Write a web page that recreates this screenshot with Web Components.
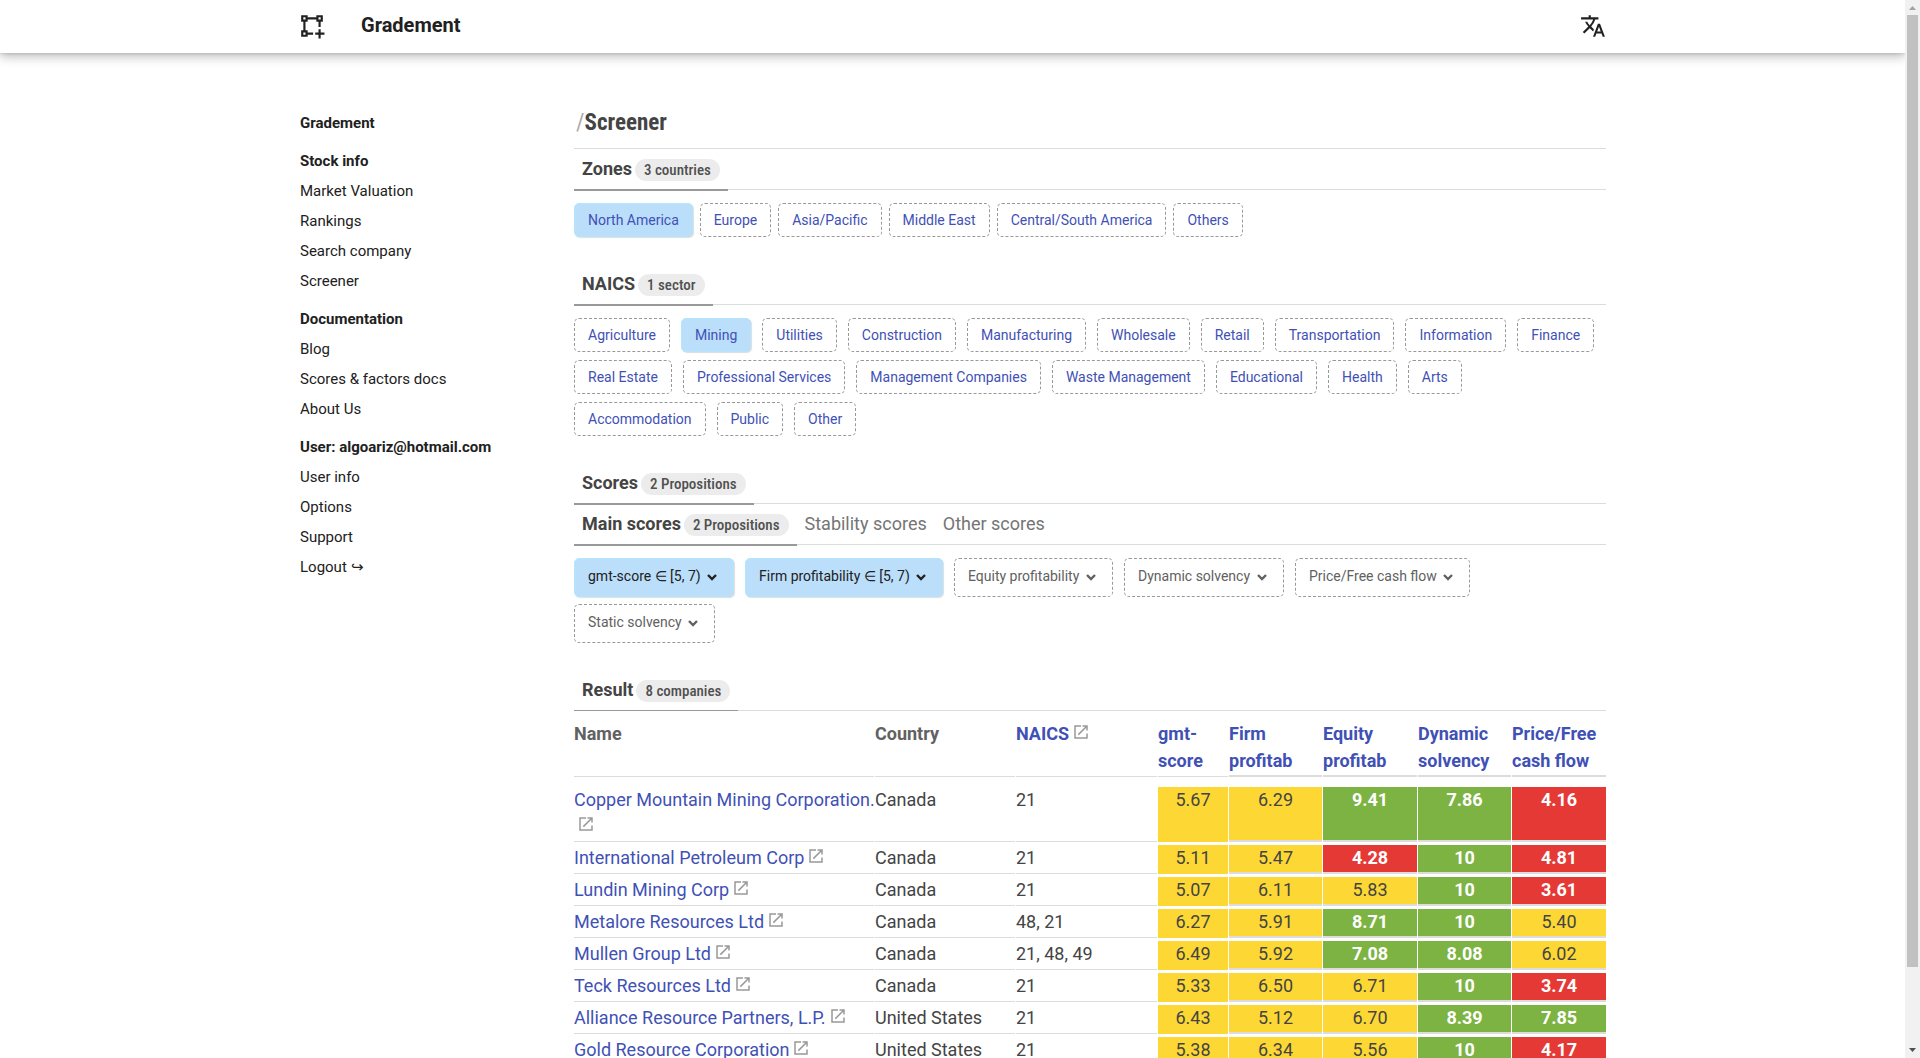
<!DOCTYPE html>
<html lang="en">
<head>
<meta charset="utf-8">
<title>Gradement - Screener</title>
<style>
  html, body { margin: 0; height: 100%; }
  body {
    --link: #3f51b5; --text: #444; --muted: #757575; --line: #dcdcdc; --strong-line: #999;
    --chip: 14px; --small: 15px; --base: 18px;
    font-family: Roboto, "Liberation Sans", sans-serif; font-size: var(--base); color: var(--text); background: #fff;
    overflow: hidden;
  }
  h1 span { color: #aaa; font-weight: 400; }
</style>
</head>
<body>
<gm-app>
  <gm-header slot="header">Gradement</gm-header>
  <gm-nav slot="nav"></gm-nav>
  <h1 slot="title"><span>/</span>Screener</h1>
  <gm-section ruled heading="Zones" badge="3 countries">
    <gm-chips label="Zones" gap="small">
      <gm-chip on>North America</gm-chip><gm-chip>Europe</gm-chip><gm-chip>Asia/Pacific</gm-chip><gm-chip>Middle East</gm-chip><gm-chip>Central/South America</gm-chip><gm-chip>Others</gm-chip>
    </gm-chips>
  </gm-section>
  <gm-section heading="NAICS" badge="1 sector">
    <gm-chips label="NAICS">
      <gm-chip>Agriculture</gm-chip><gm-chip on>Mining</gm-chip><gm-chip>Utilities</gm-chip><gm-chip>Construction</gm-chip><gm-chip>Manufacturing</gm-chip><gm-chip>Wholesale</gm-chip><gm-chip>Retail</gm-chip><gm-chip>Transportation</gm-chip><gm-chip>Information</gm-chip><gm-chip>Finance</gm-chip>
      <gm-chip>Real Estate</gm-chip><gm-chip>Professional Services</gm-chip><gm-chip>Management Companies</gm-chip><gm-chip>Waste Management</gm-chip><gm-chip>Educational</gm-chip><gm-chip>Health</gm-chip><gm-chip>Arts</gm-chip>
      <gm-chip>Accommodation</gm-chip><gm-chip>Public</gm-chip><gm-chip>Other</gm-chip>
    </gm-chips>
  </gm-section>
  <gm-section heading="Scores" badge="2 Propositions" flush></gm-section>
  <gm-section heading="Main scores" badge="2 Propositions" tabs="Stability scores|Other scores">
    <gm-chips label="Main scores" gap="filters">
      <gm-filter on value="gmt-score ∈ [5, 7)"></gm-filter><gm-filter on value="Firm profitability ∈ [5, 7)"></gm-filter><gm-filter value="Equity profitability"></gm-filter><gm-filter value="Dynamic solvency"></gm-filter><gm-filter value="Price/Free cash flow"></gm-filter><gm-filter value="Static solvency"></gm-filter>
    </gm-chips>
  </gm-section>
  <gm-section thin flush heading="Result" badge="8 companies"><gm-results></gm-results></gm-section>
</gm-app>

<script>
const define = (name, render) => customElements.define(name, class extends HTMLElement {
  connectedCallback() {
    if (this.shadowRoot) return;
    this.attachShadow({ mode: "open" }).innerHTML = render(this);
  }
});

define("gm-app", () => `
<style>
  :host { display: flex; height: 100vh; }
  .view { flex: 1; min-width: 0; overflow: hidden; }
  .grid { box-sizing: border-box; max-width: 1307px; margin: 0 auto; padding-left: 1px; display: flex; }
  nav { flex: 0 0 274px; padding-top: 60px; }
  main { flex: 1; min-width: 0; padding-top: 54px; }
  ::slotted(h1) { margin: 0 0 9px; padding-left: 2px; font: 700 23px/32px "Roboto Condensed", Roboto, sans-serif; }
</style>
<div class="view">
  <slot name="header"></slot>
  <div class="grid">
    <nav><slot name="nav"></slot></nav>
    <main><slot name="title"></slot><slot></slot></main>
  </div>
</div>
<gm-scrollbar></gm-scrollbar>`);

define("gm-scrollbar", () => `
<style>
  :host { display: flex; flex-direction: column; flex: 0 0 15px; background: #f1f1f1; }
  svg { display: block; width: 15px; height: 15px; }
  .track { flex: 1; display: flex; flex-direction: column; padding: 0 2px; }
  .thumb { flex: 952; background: #c1c1c1; }
  .rest { flex: 76; }
</style>
<svg viewBox="0 0 15 15" fill="#a3a3a3"><path d="M4 10h7L7.500 6z"/></svg>
<div class="track"><div class="thumb"></div><div class="rest"></div></div>
<svg viewBox="0 0 15 15" fill="#505050"><path d="M4 5h7L7.500 9z"/></svg>`);

define("gm-header", () => `
<style>
  :host { display: block; color: #212121; background: #fff; box-shadow: 0 0 4px rgba(0,0,0,.2), 0 4px 10px rgba(0,0,0,.24); }
  .bar { box-sizing: border-box; height: 53px; max-width: 1307px; margin: 0 auto; padding-bottom: 1px; display: flex; align-items: center; }
  .title { flex: 1; margin-left: 36px; font: 700 20px/26px Roboto, sans-serif; padding-bottom: 2px; }
  a, button { display: block; padding: 0; border: 0; background: none; color: inherit; }
  svg { display: block; width: 26px; height: 26px; }
</style>
<div class="bar">
  <a href="#" aria-label="Home"><svg viewBox="0 0 24 24" fill="none" stroke="currentColor" stroke-width="2"><path d="M3 3h4v4H3zM17 3h4v4h-4zM3 17h4v4H3zM7 5h10M5 7v10M19 7v6M7 19h6M19 15v8.500M15 19h8.500"/></svg></a>
  <div class="title"><slot></slot></div>
  <button aria-label="Language"><svg viewBox="0 0 24 24" fill="currentColor"><path d="M12.870 15.070l-2.540-2.510.03-.03A17.520 17.520 0 0 0 14.070 6H17V4h-7V2H8v2H1v2h11.170C11.500 7.920 10.440 9.750 9 11.350 8.070 10.320 7.300 9.190 6.690 8h-2c.73 1.630 1.730 3.170 2.980 4.560l-5.090 5.020L4 19l5-5 3.110 3.110.76-2.040M18.500 10h-2L12 22h2l1.120-3h4.750L21 22h2l-4.500-12m-2.620 7l1.620-4.330L19.120 17h-3.240z"/></svg></button>
</div>`);

const menu = [
  ["Gradement"],
  ["Stock info", "Market Valuation", "Rankings", "Search company", "Screener"],
  ["Documentation", "Blog", "Scores &amp; factors docs", "About Us"],
  ["User: algoariz@hotmail.com", "User info", "Options", "Support", "Logout ↪"],
];
define("gm-nav", () => `
<style>
  :host { display: flex; flex-direction: column; gap: 18px; font-size: var(--small); line-height: 20px; color: #212121; }
  ul { display: flex; flex-direction: column; gap: 10px; margin: 0; padding: 0; list-style: none; }
  li:first-child { font-weight: 700; }
  a { color: inherit; text-decoration: none; }
</style>
${menu.map(g => `<ul>${g.map((t, i) => `<li>${i || g.length < 2 ? `<a href="#">${t}</a>` : t}</li>`).join("")}</ul>`).join("")}`);

define("gm-section", el => `
<style>
  :host { display: block; margin-bottom: 27px; }
  :host([flush]) { margin-bottom: 0; }
  :host([ruled]) { border-top: 1px solid var(--line); }
  .tabs { display: flex; height: 40px; border-bottom: 1px solid var(--line); }
  .tab { display: flex; align-items: center; gap: 3px; height: 40px; padding: 0 8px; line-height: 24px; }
  .on { border-bottom: 2px solid var(--strong-line); font-weight: 700; }
  :host([thin]) .on { border-bottom-width: 1px; }
  h2 { margin: 0; font: inherit; }
  .badge { margin-top: 2px; padding: 0 9px; border-radius: 11px; background: #ececec; color: #505050; font: 500 15px/22px "Roboto Condensed", Roboto, sans-serif; }
  button { border: 0; background: none; font: inherit; color: var(--muted); }
  .body { padding-top: 13px; }
  :host([flush]) .body { padding-top: 0; }
</style>
<div class="tabs">
  <div class="tab on"><h2>${el.getAttribute("heading")}</h2><span class="badge">${el.getAttribute("badge")}</span></div>
  ${(el.getAttribute("tabs") || "").split("|").filter(Boolean).map(t => `<button class="tab">${t}</button>`).join("")}
</div>
<div class="body"><slot></slot></div>`);

define("gm-chips", el => `
<style>
  :host { display: block; }
  .row { display: flex; flex-wrap: wrap; gap: 8px 11px; padding-right: 8px; }
  :host([gap=small]) .row { gap: 7px; }
  :host([gap=filters]) .row { gap: 7px 11px; }
</style>
<div class="row" role="group" aria-label="${el.getAttribute("label")}"><slot></slot></div>`);

define("gm-chip", el => `
<style>
  :host { display: block; }
  button { height: 34px; padding: 0 13px; border: 1px dashed #999; border-radius: 5px; background: #fff; color: var(--link); font: 400 var(--chip)/20px Roboto, sans-serif; }
  :host([on]) button { border: 1px solid #b3e5fc; background: #bbdefb; box-shadow: 1px 1px 1px #ddd; }
</style>
<button aria-pressed="${el.hasAttribute("on")}"><slot></slot></button>`);

define("gm-filter", el => `
<style>
  :host { display: grid; color: #616161; }
  :host([on]) { color: #212121; }
  select, svg { grid-area: 1 / 1; }
  select { height: 39px; padding: 0 32px 3px 13px; border: 1px dashed #999; border-radius: 5px; background: #fff; color: inherit; font: 400 var(--chip)/20px Roboto, sans-serif; appearance: none; }
  :host([on]) select { border: 1px solid #b3e5fc; background: #bbdefb; box-shadow: 1px 1px 1px #ddd; }
  svg { width: 10px; height: 10px; justify-self: end; align-self: center; margin: 0 17px 2px 0; pointer-events: none; }
</style>
<select aria-label="${el.getAttribute("value")}"><option>${el.getAttribute("value")}</option></select>
<svg viewBox="0 0 10 10" fill="none" stroke="currentColor" stroke-width="2.400"><path d="M1 3l4 4 4-4"/></svg>`);

define("gm-out", () => `
<style>
  :host { display: inline-block; margin-left: 3px; vertical-align: -1px; color: #999; }
  svg { display: block; width: 18px; height: 18px; }
</style>
<svg viewBox="0 0 24 24" fill="currentColor"><path d="M14 3v2h3.590l-9.830 9.830 1.410 1.410L19 6.410V10h2V3m-2 16H5V5h7V3H3v18h18v-7h-2v5z"/></svg>`);

const rows = [
  ["Copper Mountain Mining Corporation.", "Canada", "21", "5.67", "6.29", "9.41", "7.86", "4.16"],
  ["International Petroleum Corp", "Canada", "21", "5.11", "5.47", "4.28", "10", "4.81"],
  ["Lundin Mining Corp", "Canada", "21", "5.07", "6.11", "5.83", "10", "3.61"],
  ["Metalore Resources Ltd", "Canada", "48, 21", "6.27", "5.91", "8.71", "10", "5.40"],
  ["Mullen Group Ltd", "Canada", "21, 48, 49", "6.49", "5.92", "7.08", "8.08", "6.02"],
  ["Teck Resources Ltd", "Canada", "21", "5.33", "6.50", "6.71", "10", "3.74"],
  ["Alliance Resource Partners, L.P.", "United States", "21", "6.43", "5.12", "6.70", "8.39", "7.85"],
  ["Gold Resource Corporation", "United States", "21", "5.38", "6.34", "5.56", "10", "4.17"],
];
const grade = v => v >= 7 ? "high" : v >= 5 ? "mid" : "low";
const score = (v, i) => `<td class="score ${i ? "" : "main"}"><div class="${grade(+v)}">${v}</div></td>`;
define("gm-results", () => `
<style>
  :host { display: block; margin: 0 -1px; }
  table { width: 100%; table-layout: fixed; border-spacing: 1px 0; line-height: 26px; }
  .c-country { width: 140px; } .c-naics { width: 141px; } .c-main { width: 70px; } .c-score { width: 93px; } .c-wide { width: 94px; }
  th { height: 54px; padding: 9px 0 2px; text-align: left; vertical-align: top; line-height: 27px; color: #616161; border-bottom: 1px solid var(--line); }
  th.score { border-bottom-width: 2px; padding-bottom: 1px; }
  td { padding: 3px 0 2px; vertical-align: top; border-bottom: 1px solid var(--line); height: 26px; }
  tr:first-child td { padding-top: 10px; }
  td.score { height: 1px; padding-bottom: 0; border-bottom-width: 2px; text-align: center; }
  td.main { border-bottom: 0; }
  td.score div { box-sizing: border-box; height: 100%; min-height: 27px; }
  td.main div { min-height: 29px; }
  tr:first-child td.score div { min-height: 53px; }
  tr:first-child td.main div { min-height: 55px; }
  .mid { background: #fdd835; } .high { background: #7cb342; } .low { background: #e53935; }
  .high, .low { color: #fff; font-weight: 700; }
  a { color: var(--link); text-decoration: none; white-space: nowrap; }
</style>
<table>
  <colgroup><col><col class="c-country"><col class="c-naics"><col class="c-main"><col class="c-score"><col class="c-wide"><col class="c-score"><col class="c-wide"></colgroup>
  <thead><tr><th>Name</th><th>Country</th><th><a href="#">NAICS</a><gm-out></gm-out></th><th><a href="#">gmt-<br>score</a></th>
  <th class="score"><a href="#">Firm<br>profitab</a></th><th class="score"><a href="#">Equity<br>profitab</a></th><th class="score"><a href="#">Dynamic<br>solvency</a></th><th class="score"><a href="#">Price/Free<br>cash flow</a></th></tr></thead>
  <tbody>${rows.map(([n, c, k, ...s]) => `<tr><td><a href="#">${n}</a><wbr><gm-out></gm-out></td><td>${c}</td><td>${k}</td>${s.map(score).join("")}</tr>`).join("")}</tbody>
</table>`);
</script>
</body>
</html>
